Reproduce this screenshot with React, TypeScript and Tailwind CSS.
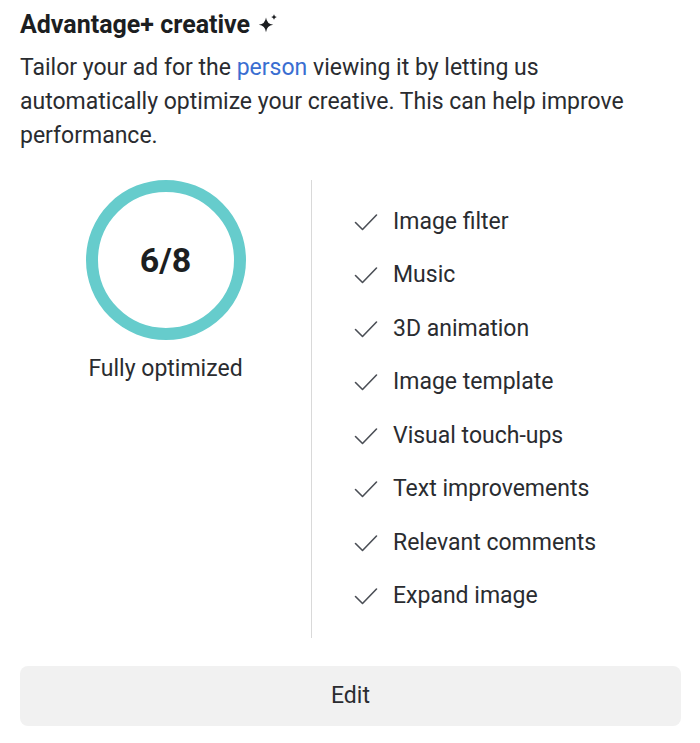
const items = [
  "Image filter",
  "Music",
  "3D animation",
  "Image template",
  "Visual touch-ups",
  "Text improvements",
  "Relevant comments",
  "Expand image",
];

const Sparkle = () => (
  <svg width="24" height="24" viewBox="0 0 24 24" className="ml-[6px]" fill="#1c1e21">
    <path d="M10 4.5 Q10.8 11 17.2 11.8 Q10.8 12.6 10 19.2 Q9.2 12.6 2.8 11.8 Q9.2 11 10 4.5 Z" />
    <path d="M18 1.2 Q18.4 3.6 20.8 4 Q18.4 4.4 18 6.8 Q17.6 4.4 15.2 4 Q17.6 3.6 18 1.2 Z" />
  </svg>
);

const Check = () => (
  <svg width="24" height="18" viewBox="0 0 24 18" fill="none" className="shrink-0">
    <path d="M1.5 9.5 L8.5 16.5 L22.5 2" stroke="#4b4f56" strokeWidth="1.6" strokeLinecap="round" strokeLinejoin="round" />
  </svg>
);

const App = () => {
  return (
    <div className="min-h-[743px] w-[700px] bg-white px-5 pt-[10px] font-['Roboto',sans-serif] text-[#1c1e21]">
      <div className="flex h-[30px] items-center">
        <h2 className="text-[25px] font-bold leading-[30px]">Advantage+ creative</h2>
        <Sparkle />
      </div>
      <p className="mt-[11px] text-[23px] leading-[34px] text-[#2a2c30]">
        Tailor your ad for the <span className="text-[#3a6ed1]">person</span> viewing it by letting us
        automatically optimize your creative. This can help improve performance.
      </p>

      <div className="mt-[27px] flex">
        <div className="flex w-[291px] flex-col items-center">
          <div className="flex h-[160px] w-[160px] items-center justify-center rounded-full border-[12px] border-[#66cccc]">
            <span className="text-[34px] font-bold">6/8</span>
          </div>
          <p className="mt-[15px] text-[23px] leading-[28px] text-[#2a2c30]">Fully optimized</p>
        </div>
        <div className="w-px bg-[#d9d9d9]" />
        <ul className="flex flex-col py-[15px] pl-[42px]">
          {items.map((item) => (
            <li key={item} className="flex h-[53.5px] items-center gap-[15px]">
              <Check />
              <span className="text-[23px] text-[#2a2c30]">{item}</span>
            </li>
          ))}
        </ul>
      </div>

      <button className="mt-[28px] flex h-[60px] w-[661px] items-center justify-center rounded-[8px] bg-[#f1f1f1] text-[23px] text-[#2a2c30]">
        Edit
      </button>
    </div>
  );
};

export default App;
